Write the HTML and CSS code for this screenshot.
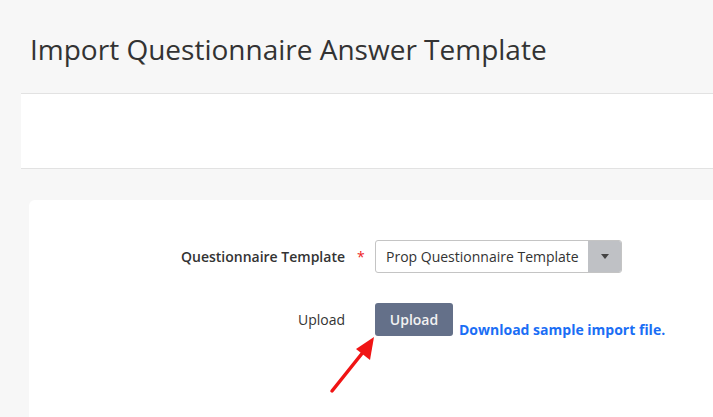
FILE: index.html
```html
<!DOCTYPE html>
<html lang="en">
<head>
    <meta charset="UTF-8">
    <meta name="viewport" content="width=device-width, initial-scale=1.0">
    <title>Import Questionnaire Answer Template</title>
    <link rel="stylesheet" href="styles.css">
</head>
<body>

<h1 class="page-title">Import Questionnaire Answer Template</h1>

<!-- empty toolbar band -->
<div class="band"></div>

<div class="card">
    <div class="form-row">
        <label class="form-label" for="template">Questionnaire Template</label>
        <span class="req">*</span>
        <div class="select" id="template">
            <span class="select-value">Prop Questionnaire Template</span>
            <span class="select-arrow"></span>
        </div>
    </div>

    <div class="form-row upload-row">
        <span class="form-label plain">Upload</span>
        <button class="btn-upload">Upload</button>
        <a class="sample-link" href="#">Download sample import file.</a>

        <svg class="pointer" width="60" height="70" viewBox="0 0 60 70">
            <line x1="6" y1="64" x2="38" y2="24" stroke="#f01414" stroke-width="3.5" stroke-linecap="round"/>
            <polygon points="48,10 44,33 30,22" fill="#f01414"/>
        </svg>
    </div>
</div>

</body>
</html>
```

FILE: styles.css
```css
body {
    margin: 0;
    background-color: #f7f7f7;
    font-family: "Open Sans", Arial, sans-serif;
    color: #333;
    height: 417px;
    overflow: hidden;
}
.page-title {
    margin: 0;
    padding: 30px 0 0 30px;
    height: 93px;
    box-sizing: border-box;
    font-size: 28px;
    line-height: 38px;
    font-weight: 400;
    color: #333;
}
.band {
    margin-left: 21px;
    height: 74px;
    background: #fff;
    border-top: 1px solid #e2e2e2;
    border-bottom: 1px solid #e2e2e2;
}
.card {
    margin: 31px 0 0 29px;
    background: #fff;
    border-top-left-radius: 6px;
    height: 217px;
    padding-top: 40px;
    box-sizing: border-box;
}
.form-row {
    display: flex;
    align-items: center;
}
.form-label {
    width: 316px;
    text-align: right;
    font-size: 14px;
    font-weight: 600;
    color: #333;
}
.form-label.plain {
    font-weight: 400;
    margin-right: 30px;
}
.req {
    width: 30px;
    padding-left: 12px;
    box-sizing: border-box;
    color: #e22;
    font-size: 14px;
}
.select {
    display: flex;
    width: 247px;
    height: 33px;
    border: 1px solid #c4c4c4;
    border-radius: 3px;
    box-sizing: border-box;
    overflow: hidden;
}
.select-value {
    flex: 1;
    padding-left: 10px;
    font-size: 14px;
    line-height: 31px;
    color: #333;
}
.select-arrow {
    width: 33px;
    background: #bfc1c5;
    position: relative;
}
.select-arrow::after {
    content: "";
    position: absolute;
    left: 13px;
    top: 13px;
    border-left: 4px solid transparent;
    border-right: 4px solid transparent;
    border-top: 5px solid #444;
}
.upload-row {
    margin-top: 30px;
    align-items: flex-start;
    position: relative;
}
.upload-row .form-label {
    line-height: 33px;
}
.btn-upload {
    width: 78px;
    height: 33px;
    background: #647089;
    color: #f2f2f2;
    border: none;
    border-radius: 3px;
    font-family: "Open Sans", Arial, sans-serif;
    font-size: 14px;
    font-weight: 600;
    cursor: pointer;
}
.sample-link {
    margin-left: 6px;
    margin-top: 17px;
    color: #1a6ef5;
    font-size: 14px;
    font-weight: 700;
    text-decoration: none;
    line-height: 20px;
}
.pointer {
    position: absolute;
    left: 297px;
    top: 24px;
}
```
